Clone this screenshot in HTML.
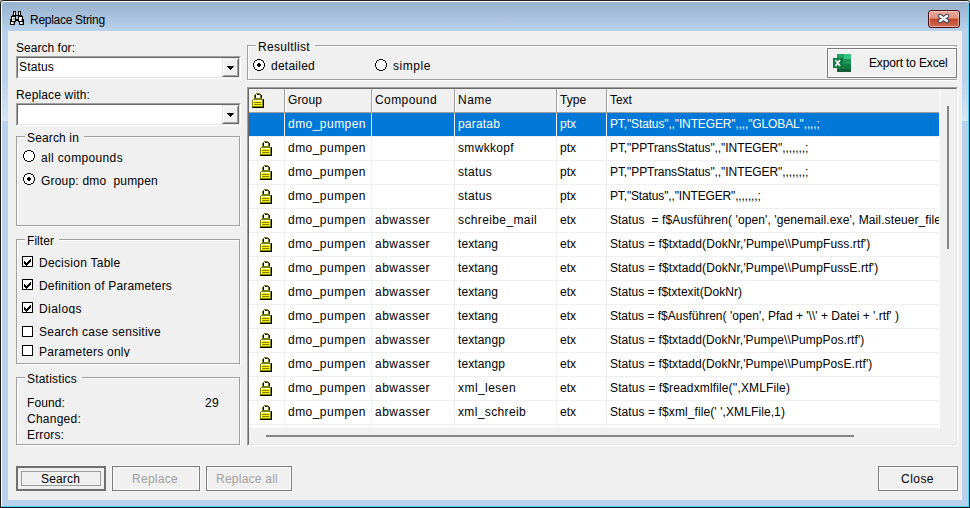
<!DOCTYPE html>
<html><head><meta charset="utf-8"><style>
*{box-sizing:border-box;margin:0;padding:0}
html,body{width:970px;height:508px;overflow:hidden;background:#b4b4b4}
body{position:relative;font-family:"Liberation Sans",sans-serif;font-size:12px;color:#000}
.a{position:absolute}
.t{position:absolute;line-height:20px;white-space:pre}
#title{position:absolute;left:0;top:0;width:970px;height:31px;background:linear-gradient(#95afcc,#b9d1ea);border-radius:4px 4px 0 0}
#frame{position:absolute;left:0;top:31px;width:970px;height:477px;background:#b9d1ea}
#client{position:absolute;left:8px;top:31px;width:954px;height:469px;background:#f0f0f0}
.sunk{position:absolute;border-style:solid;border-width:1px;border-color:#a0a0a0 #fff #fff #a0a0a0}
.sunk>.in{position:absolute;left:0;top:0;right:0;bottom:0;border-style:solid;border-width:1px;border-color:#696969 #e3e3e3 #e3e3e3 #696969;background:#fff}
.ddb{position:absolute;border-style:solid;border-width:1px;border-color:#e3e3e3 #696969 #696969 #e3e3e3;background:#f0f0f0}
.ddb>.in{position:absolute;left:0;top:0;right:0;bottom:0;border-style:solid;border-width:1px;border-color:#fff #a0a0a0 #a0a0a0 #fff}
.grp{position:absolute;border:1px solid #a0a0a0;box-shadow:inset 1px 1px 0 #fff,1px 1px 0 #fff}
.gl{position:absolute;background:#f0f0f0;line-height:20px;white-space:pre}
.btn{position:absolute;border:1px solid #7a7a7a;background:#f0f0f0;box-shadow:inset 0 0 0 1px #fff,0 0 0 1px #f7f7f7}
</style></head><body>
<div id="frame"></div><div id="title"></div>
<div class="a" style="left:0;top:0;width:970px;height:508px;border-left:1px solid #1b1b1b;border-top:1px solid #1e1e1e;border-radius:4px 4px 0 0"></div>
<div class="a" style="left:1px;top:1px;width:968px;height:506px;border-left:1px solid #fff;border-top:1px solid #fff;border-radius:3px 3px 0 0"></div>
<div class="a" style="left:968px;top:4px;width:1px;height:503px;background:#45d8ff"></div>
<div class="a" style="left:1px;top:506px;width:968px;height:1px;background:#45d8ff"></div>
<div class="a" style="left:969px;top:3px;width:1px;height:505px;background:#1a1a1a"></div>
<div class="a" style="left:0;top:507px;width:970px;height:1px;background:#111"></div>
<div class="a" style="left:2px;top:78px;width:6px;height:43px;background:linear-gradient(rgba(255,255,255,0),rgba(255,255,255,.45))"></div>
<div class="a" style="left:962px;top:78px;width:6px;height:43px;background:linear-gradient(rgba(255,255,255,0),rgba(255,255,255,.45))"></div>
<div id="client"></div>
<svg class="a" style="left:10px;top:11px" width="14" height="14" viewBox="0 0 14 14" shape-rendering="crispEdges"><path fill="#000" d="M3 0h3v4H3zM8 0h3v4H8zM2 4h10v1H2zM1 5h5v5H1zM8 5h5v5H8zM0 8h1v6H0zM13 8h1v6h-1zM5 8h4v2H5zM0 10h6v1H0zM8 10h6v1H8zM4 11h1v2H4zM9 11h1v2H9zM0 13h5v1H0zM9 13h5v1H9z"/><path fill="#fff" d="M4 1h1v3H4zM9 1h1v3H9zM2 6h3v4H2zM9 6h3v4H9zM1 11h3v2H1zM10 11h3v2h-3z"/><path fill="#a0a0a0" d="M3 7h2v2H3zM11 8h1v2h-1zM3 11h1v2H3zM12 11h1v2h-1z"/></svg>
<div class="t" style="left:30px;top:10px;letter-spacing:-0.28px;">Replace String</div>
<div class="a" style="left:928px;top:10px;width:32px;height:18px;border:1px solid #4a1018;border-radius:3px;background:linear-gradient(#eaa99a 0,#e0927f 45%,#c2442a 50%,#d06c55 100%);box-shadow:inset 0 0 0 1px rgba(255,225,215,.55)"></div>
<svg class="a" style="left:937px;top:13px" width="13" height="11" viewBox="0 0 13 11"><path d="M3 3L10 8M10 3L3 8" stroke="#2b3850" stroke-width="4.4" stroke-linecap="round"/><path d="M3 3L10 8M10 3L3 8" stroke="#fff" stroke-width="2.6" stroke-linecap="round"/></svg>
<div class="t" style="left:16px;top:38px;letter-spacing:0.028px;">Search for:</div>
<div class="sunk" style="left:16px;top:56px;width:225px;height:23px"><div class="in"></div></div><div class="ddb" style="left:222px;top:58px;width:17px;height:19px"><div class="in"></div></div><svg class="a" style="left:227px;top:66px" width="7" height="4" viewBox="0 0 7 4" shape-rendering="crispEdges"><path fill="#000" d="M0 0h7v1H0zM1 1h5v1H1zM2 2h3v1H2zM3 3h1v1H3z"/></svg>
<div class="t" style="left:19px;top:57px;letter-spacing:0.163px;">Status</div>
<div class="t" style="left:16px;top:85px;letter-spacing:0.151px;">Replace with:</div>
<div class="sunk" style="left:16px;top:103px;width:225px;height:23px"><div class="in"></div></div><div class="ddb" style="left:222px;top:105px;width:17px;height:19px"><div class="in"></div></div><svg class="a" style="left:227px;top:113px" width="7" height="4" viewBox="0 0 7 4" shape-rendering="crispEdges"><path fill="#000" d="M0 0h7v1H0zM1 1h5v1H1zM2 2h3v1H2zM3 3h1v1H3z"/></svg>
<div class="grp" style="left:16px;top:136px;width:224px;height:90px"></div>
<div class="t" style="left:25px;top:128px;letter-spacing:0.145px;background:#f0f0f0;padding:0 5px 0 2px">Search in</div>
<svg class="a" style="left:23px;top:150px" width="12" height="12" viewBox="0 0 12 12" shape-rendering="crispEdges"><path fill="#fff" d="M4 1h4v1H4zM2 2h8v2H2zM1 4h10v4H1zM2 8h8v2H2zM4 10h4v1H4z"/><path fill="#000" d="M4 0h4v1H4zM2 1h2v1H2zM8 1h2v1H8zM1 2h1v2H1zM10 2h1v2h-1zM0 4h1v4H0zM11 4h1v4h-1zM1 8h1v2H1zM10 8h1v2h-1zM2 10h2v1H2zM8 10h2v1H8zM4 11h4v1H4z"/></svg>
<div class="t" style="left:41px;top:148px;letter-spacing:0.355px;">all compounds</div>
<svg class="a" style="left:23px;top:173px" width="12" height="12" viewBox="0 0 12 12" shape-rendering="crispEdges"><path fill="#fff" d="M4 1h4v1H4zM2 2h8v2H2zM1 4h10v4H1zM2 8h8v2H2zM4 10h4v1H4z"/><path fill="#000" d="M4 0h4v1H4zM2 1h2v1H2zM8 1h2v1H8zM1 2h1v2H1zM10 2h1v2h-1zM0 4h1v4H0zM11 4h1v4h-1zM1 8h1v2H1zM10 8h1v2h-1zM2 10h2v1H2zM8 10h2v1H8zM4 11h4v1H4z"/><path fill="#000" d="M5 4h2v1H5zM4 5h4v2H4zM5 7h2v1H5z"/></svg>
<div class="t" style="left:41px;top:171px;letter-spacing:0.2px;">Group: dmo  pumpen</div>
<div class="grp" style="left:16px;top:239px;width:224px;height:125px"></div>
<div class="t" style="left:25px;top:231px;letter-spacing:0.056px;background:#f0f0f0;padding:0 5px 0 2px">Filter</div>
<svg class="a" style="left:22px;top:256px" width="11" height="11" viewBox="0 0 11 11" shape-rendering="crispEdges"><path fill="#000" d="M0 0h11v1H0zM0 10h11v1H0zM0 1h1v9H0zM10 1h1v9h-1z"/><path fill="#fff" d="M1 1h9v9H1z"/><path fill="#000" d="M8 3h1v1H8zM7 4h2v1H7zM2 5h1v1H2zM6 5h3v1H6zM2 6h2v1H2zM5 6h3v1H5zM2 7h5v1H2zM3 8h3v1H3zM4 9h1v1H4z"/></svg>
<div class="t" style="left:39px;top:253px;letter-spacing:0.259px;">Decision Table</div>
<svg class="a" style="left:22px;top:279px" width="11" height="11" viewBox="0 0 11 11" shape-rendering="crispEdges"><path fill="#000" d="M0 0h11v1H0zM0 10h11v1H0zM0 1h1v9H0zM10 1h1v9h-1z"/><path fill="#fff" d="M1 1h9v9H1z"/><path fill="#000" d="M8 3h1v1H8zM7 4h2v1H7zM2 5h1v1H2zM6 5h3v1H6zM2 6h2v1H2zM5 6h3v1H5zM2 7h5v1H2zM3 8h3v1H3zM4 9h1v1H4z"/></svg>
<div class="t" style="left:39px;top:276px;letter-spacing:0.178px;">Definition of Parameters</div>
<svg class="a" style="left:22px;top:302px" width="11" height="11" viewBox="0 0 11 11" shape-rendering="crispEdges"><path fill="#000" d="M0 0h11v1H0zM0 10h11v1H0zM0 1h1v9H0zM10 1h1v9h-1z"/><path fill="#fff" d="M1 1h9v9H1z"/><path fill="#000" d="M8 3h1v1H8zM7 4h2v1H7zM2 5h1v1H2zM6 5h3v1H6zM2 6h2v1H2zM5 6h3v1H5zM2 7h5v1H2zM3 8h3v1H3zM4 9h1v1H4z"/></svg>
<div class="t" style="left:39px;top:299px;letter-spacing:0.426px;height:15px;overflow:hidden;">Dialogs</div>
<svg class="a" style="left:22px;top:326px" width="11" height="11" viewBox="0 0 11 11" shape-rendering="crispEdges"><path fill="#000" d="M0 0h11v1H0zM0 10h11v1H0zM0 1h1v9H0zM10 1h1v9h-1z"/><path fill="#fff" d="M1 1h9v9H1z"/></svg>
<div class="t" style="left:39px;top:322px;letter-spacing:0.251px;">Search case sensitive</div>
<svg class="a" style="left:22px;top:345px" width="11" height="11" viewBox="0 0 11 11" shape-rendering="crispEdges"><path fill="#000" d="M0 0h11v1H0zM0 10h11v1H0zM0 1h1v9H0zM10 1h1v9h-1z"/><path fill="#fff" d="M1 1h9v9H1z"/></svg>
<div class="t" style="left:39px;top:342px;letter-spacing:0.242px;height:15px;overflow:hidden;">Parameters only</div>
<div class="grp" style="left:16px;top:377px;width:224px;height:68px"></div>
<div class="t" style="left:25px;top:369px;letter-spacing:0.199px;background:#f0f0f0;padding:0 5px 0 2px">Statistics</div>
<div class="t" style="left:27px;top:393px;letter-spacing:0.107px;">Found:</div>
<div class="t" style="left:27px;top:409px;letter-spacing:0.245px;">Changed:</div>
<div class="t" style="left:27px;top:425px;letter-spacing:0.143px;">Errors:</div>
<div class="t" style="left:205px;top:393px;letter-spacing:0.326px;">29</div>
<div class="a" style="left:16px;top:466px;width:90px;height:25px;border:2px solid #707070;background:#f0f0f0"></div>
<div class="a" style="left:21px;top:471px;width:80px;height:15px;border:1px solid #9c9c9c"></div>
<div class="t" style="left:41px;top:469px;letter-spacing:0.163px;">Search</div>
<div class="btn" style="left:112px;top:466px;width:88px;height:25px"></div>
<div class="t" style="left:132px;top:469px;letter-spacing:0.282px;color:#a0a0a0">Replace</div>
<div class="btn" style="left:206px;top:466px;width:86px;height:25px"></div>
<div class="t" style="left:216px;top:469px;letter-spacing:0.239px;color:#a0a0a0">Replace all</div>
<div class="btn" style="left:878px;top:466px;width:80px;height:25px"></div>
<div class="t" style="left:901px;top:469px;letter-spacing:0.464px;">Close</div>
<div class="grp" style="left:247px;top:45px;width:710px;height:35px"></div>
<div class="t" style="left:256px;top:37px;letter-spacing:0.332px;background:#f0f0f0;padding:0 5px 0 2px">Resultlist</div>
<svg class="a" style="left:253px;top:59px" width="12" height="12" viewBox="0 0 12 12" shape-rendering="crispEdges"><path fill="#fff" d="M4 1h4v1H4zM2 2h8v2H2zM1 4h10v4H1zM2 8h8v2H2zM4 10h4v1H4z"/><path fill="#000" d="M4 0h4v1H4zM2 1h2v1H2zM8 1h2v1H8zM1 2h1v2H1zM10 2h1v2h-1zM0 4h1v4H0zM11 4h1v4h-1zM1 8h1v2H1zM10 8h1v2h-1zM2 10h2v1H2zM8 10h2v1H8zM4 11h4v1H4z"/><path fill="#000" d="M5 4h2v1H5zM4 5h4v2H4zM5 7h2v1H5z"/></svg>
<div class="t" style="left:271px;top:56px;letter-spacing:0.246px;">detailed</div>
<svg class="a" style="left:375px;top:59px" width="12" height="12" viewBox="0 0 12 12" shape-rendering="crispEdges"><path fill="#fff" d="M4 1h4v1H4zM2 2h8v2H2zM1 4h10v4H1zM2 8h8v2H2zM4 10h4v1H4z"/><path fill="#000" d="M4 0h4v1H4zM2 1h2v1H2zM8 1h2v1H8zM1 2h1v2H1zM10 2h1v2h-1zM0 4h1v4H0zM11 4h1v4h-1zM1 8h1v2H1zM10 8h1v2h-1zM2 10h2v1H2zM8 10h2v1H8zM4 11h4v1H4z"/></svg>
<div class="t" style="left:393px;top:56px;letter-spacing:0.554px;">simple</div>
<div class="btn" style="left:827px;top:48px;width:130px;height:30px"></div>
<div class="t" style="left:869px;top:53px;letter-spacing:-0.14px;">Export to Excel</div>
<svg class="a" style="left:832px;top:53px" width="20" height="20" viewBox="0 0 20 20" shape-rendering="crispEdges"><rect x="5" y="1" width="14" height="18" fill="#185c37"/><rect x="5" y="1" width="14" height="5" fill="#21a366"/><rect x="12" y="1" width="7" height="5" fill="#33c481"/><rect x="5" y="6" width="14" height="5" fill="#1e9459"/><rect x="5" y="11" width="14" height="5" fill="#107c41"/><rect x="1" y="5" width="10" height="10" fill="#107c41"/><path d="M3.5 7L8 13M8 7L3.5 13" stroke="#fff" stroke-width="1.6" shape-rendering="geometricPrecision"/></svg>
<div class="sunk" style="left:247px;top:87px;width:711px;height:359px"><div class="in" style="background:#f0f0f0"></div></div>
<div class="a" style="left:249px;top:113px;width:691px;height:315px;background:#fff"></div>
<div class="a" style="left:249px;top:89px;width:690px;height:24px;background:#f0f0f0;border-bottom:1px solid #a0a0a0"></div>
<div class="a" style="left:939px;top:89px;width:1px;height:339px;background:#fff"></div>
<div class="a" style="left:284px;top:89px;width:1px;height:23px;background:#a0a0a0"></div>
<div class="a" style="left:285px;top:89px;width:1px;height:23px;background:#fff"></div>
<div class="a" style="left:371px;top:89px;width:1px;height:23px;background:#a0a0a0"></div>
<div class="a" style="left:372px;top:89px;width:1px;height:23px;background:#fff"></div>
<div class="a" style="left:454px;top:89px;width:1px;height:23px;background:#a0a0a0"></div>
<div class="a" style="left:455px;top:89px;width:1px;height:23px;background:#fff"></div>
<div class="a" style="left:556px;top:89px;width:1px;height:23px;background:#a0a0a0"></div>
<div class="a" style="left:557px;top:89px;width:1px;height:23px;background:#fff"></div>
<div class="a" style="left:606px;top:89px;width:1px;height:23px;background:#a0a0a0"></div>
<div class="a" style="left:607px;top:89px;width:1px;height:23px;background:#fff"></div>
<div class="t" style="left:288px;top:90px;letter-spacing:0.13px;">Group</div>
<div class="t" style="left:375px;top:90px;letter-spacing:0.412px;">Compound</div>
<div class="t" style="left:458px;top:90px;letter-spacing:0.498px;">Name</div>
<div class="t" style="left:560px;top:90px;letter-spacing:0.081px;">Type</div>
<div class="t" style="left:610px;top:90px;letter-spacing:-0.084px;">Text</div>
<svg class="a" style="left:252px;top:93px" width="12" height="15" viewBox="0 0 12 15" shape-rendering="crispEdges"><path fill="#808000" d="M4 0h4v1H4zM3 1h1v1H3zM7 1h1v1H7zM2 2h1v4H2zM8 2h1v3H8zM3 5h7v1H3zM1 6h10v1H1zM0 7h1v7H0zM10 7h1v7h-1zM0 13h11v1H0zM2 9h7v1H2zM2 11h7v1H2z"/><path fill="#000" d="M5 1h2v1H5zM8 1h1v1H8zM3 2h1v3H3zM9 2h1v3H9zM11 6h1v9h-1zM0 14h11v1H0z"/><path fill="#ffff00" d="M2 8h8v1H2zM2 10h8v1H2zM2 12h8v1H2z"/><path fill="#fff" d="M4 1h1v1H4zM4 2h4v3H4zM1 7h9v1H1zM1 8h1v5H1z"/><path fill="#c8c8c8" d="M9 9h1v1H9zM9 11h1v1H9z"/></svg>
<div class="a" style="left:249px;top:113px;width:690px;height:23px;background:#0078d7"></div>
<div class="a" style="left:249px;top:136px;width:690px;height:1px;background:#f0f0f0"></div>
<div class="t" style="left:288px;top:114px;letter-spacing:0.462px;width:83px;overflow:hidden;color:#fff">dmo_pumpen</div>
<div class="t" style="left:375px;top:114px;letter-spacing:0px;width:79px;overflow:hidden;color:#fff"></div>
<div class="t" style="left:458px;top:114px;letter-spacing:0.186px;width:98px;overflow:hidden;color:#fff">paratab</div>
<div class="t" style="left:560px;top:114px;letter-spacing:-0.003px;width:46px;overflow:hidden;color:#fff">ptx</div>
<div class="t" style="left:610px;top:114px;letter-spacing:-0.135px;width:329px;overflow:hidden;color:#fff">PT,&quot;Status&quot;,,&quot;INTEGER&quot;,,,,&quot;GLOBAL&quot;,,,,;</div>
<div class="a" style="left:249px;top:160px;width:690px;height:1px;background:#f0f0f0"></div>
<svg class="a" style="left:260px;top:141px" width="12" height="15" viewBox="0 0 12 15" shape-rendering="crispEdges"><path fill="#808000" d="M4 0h4v1H4zM3 1h1v1H3zM7 1h1v1H7zM2 2h1v4H2zM8 2h1v3H8zM3 5h7v1H3zM1 6h10v1H1zM0 7h1v7H0zM10 7h1v7h-1zM0 13h11v1H0zM2 9h7v1H2zM2 11h7v1H2z"/><path fill="#000" d="M5 1h2v1H5zM8 1h1v1H8zM3 2h1v3H3zM9 2h1v3H9zM11 6h1v9h-1zM0 14h11v1H0z"/><path fill="#ffff00" d="M2 8h8v1H2zM2 10h8v1H2zM2 12h8v1H2z"/><path fill="#fff" d="M4 1h1v1H4zM4 2h4v3H4zM1 7h9v1H1zM1 8h1v5H1z"/><path fill="#c8c8c8" d="M9 9h1v1H9zM9 11h1v1H9z"/></svg>
<div class="t" style="left:288px;top:138px;letter-spacing:0.462px;width:83px;overflow:hidden;color:#000">dmo_pumpen</div>
<div class="t" style="left:375px;top:138px;letter-spacing:0px;width:79px;overflow:hidden;color:#000"></div>
<div class="t" style="left:458px;top:138px;letter-spacing:0.332px;width:98px;overflow:hidden;color:#000">smwkkopf</div>
<div class="t" style="left:560px;top:138px;letter-spacing:-0.003px;width:46px;overflow:hidden;color:#000">ptx</div>
<div class="t" style="left:610px;top:138px;letter-spacing:-0.083px;width:329px;overflow:hidden;color:#000">PT,&quot;PPTransStatus&quot;,,&quot;INTEGER&quot;,,,,,,,;</div>
<div class="a" style="left:249px;top:184px;width:690px;height:1px;background:#f0f0f0"></div>
<svg class="a" style="left:260px;top:165px" width="12" height="15" viewBox="0 0 12 15" shape-rendering="crispEdges"><path fill="#808000" d="M4 0h4v1H4zM3 1h1v1H3zM7 1h1v1H7zM2 2h1v4H2zM8 2h1v3H8zM3 5h7v1H3zM1 6h10v1H1zM0 7h1v7H0zM10 7h1v7h-1zM0 13h11v1H0zM2 9h7v1H2zM2 11h7v1H2z"/><path fill="#000" d="M5 1h2v1H5zM8 1h1v1H8zM3 2h1v3H3zM9 2h1v3H9zM11 6h1v9h-1zM0 14h11v1H0z"/><path fill="#ffff00" d="M2 8h8v1H2zM2 10h8v1H2zM2 12h8v1H2z"/><path fill="#fff" d="M4 1h1v1H4zM4 2h4v3H4zM1 7h9v1H1zM1 8h1v5H1z"/><path fill="#c8c8c8" d="M9 9h1v1H9zM9 11h1v1H9z"/></svg>
<div class="t" style="left:288px;top:162px;letter-spacing:0.462px;width:83px;overflow:hidden;color:#000">dmo_pumpen</div>
<div class="t" style="left:375px;top:162px;letter-spacing:0px;width:79px;overflow:hidden;color:#000"></div>
<div class="t" style="left:458px;top:162px;letter-spacing:0.331px;width:98px;overflow:hidden;color:#000">status</div>
<div class="t" style="left:560px;top:162px;letter-spacing:-0.003px;width:46px;overflow:hidden;color:#000">ptx</div>
<div class="t" style="left:610px;top:162px;letter-spacing:-0.083px;width:329px;overflow:hidden;color:#000">PT,&quot;PPTransStatus&quot;,,&quot;INTEGER&quot;,,,,,,,;</div>
<div class="a" style="left:249px;top:208px;width:690px;height:1px;background:#f0f0f0"></div>
<svg class="a" style="left:260px;top:189px" width="12" height="15" viewBox="0 0 12 15" shape-rendering="crispEdges"><path fill="#808000" d="M4 0h4v1H4zM3 1h1v1H3zM7 1h1v1H7zM2 2h1v4H2zM8 2h1v3H8zM3 5h7v1H3zM1 6h10v1H1zM0 7h1v7H0zM10 7h1v7h-1zM0 13h11v1H0zM2 9h7v1H2zM2 11h7v1H2z"/><path fill="#000" d="M5 1h2v1H5zM8 1h1v1H8zM3 2h1v3H3zM9 2h1v3H9zM11 6h1v9h-1zM0 14h11v1H0z"/><path fill="#ffff00" d="M2 8h8v1H2zM2 10h8v1H2zM2 12h8v1H2z"/><path fill="#fff" d="M4 1h1v1H4zM4 2h4v3H4zM1 7h9v1H1zM1 8h1v5H1z"/><path fill="#c8c8c8" d="M9 9h1v1H9zM9 11h1v1H9z"/></svg>
<div class="t" style="left:288px;top:186px;letter-spacing:0.462px;width:83px;overflow:hidden;color:#000">dmo_pumpen</div>
<div class="t" style="left:375px;top:186px;letter-spacing:0px;width:79px;overflow:hidden;color:#000"></div>
<div class="t" style="left:458px;top:186px;letter-spacing:0.331px;width:98px;overflow:hidden;color:#000">status</div>
<div class="t" style="left:560px;top:186px;letter-spacing:-0.003px;width:46px;overflow:hidden;color:#000">ptx</div>
<div class="t" style="left:610px;top:186px;letter-spacing:-0.147px;width:329px;overflow:hidden;color:#000">PT,&quot;Status&quot;,,&quot;INTEGER&quot;,,,,,,,;</div>
<div class="a" style="left:249px;top:232px;width:690px;height:1px;background:#f0f0f0"></div>
<svg class="a" style="left:260px;top:213px" width="12" height="15" viewBox="0 0 12 15" shape-rendering="crispEdges"><path fill="#808000" d="M4 0h4v1H4zM3 1h1v1H3zM7 1h1v1H7zM2 2h1v4H2zM8 2h1v3H8zM3 5h7v1H3zM1 6h10v1H1zM0 7h1v7H0zM10 7h1v7h-1zM0 13h11v1H0zM2 9h7v1H2zM2 11h7v1H2z"/><path fill="#000" d="M5 1h2v1H5zM8 1h1v1H8zM3 2h1v3H3zM9 2h1v3H9zM11 6h1v9h-1zM0 14h11v1H0z"/><path fill="#ffff00" d="M2 8h8v1H2zM2 10h8v1H2zM2 12h8v1H2z"/><path fill="#fff" d="M4 1h1v1H4zM4 2h4v3H4zM1 7h9v1H1zM1 8h1v5H1z"/><path fill="#c8c8c8" d="M9 9h1v1H9zM9 11h1v1H9z"/></svg>
<div class="t" style="left:288px;top:210px;letter-spacing:0.462px;width:83px;overflow:hidden;color:#000">dmo_pumpen</div>
<div class="t" style="left:375px;top:210px;letter-spacing:0.455px;width:79px;overflow:hidden;color:#000">abwasser</div>
<div class="t" style="left:458px;top:210px;letter-spacing:0.382px;width:98px;overflow:hidden;color:#000">schreibe_mail</div>
<div class="t" style="left:560px;top:210px;letter-spacing:-0.003px;width:46px;overflow:hidden;color:#000">etx</div>
<div class="t" style="left:610px;top:210px;letter-spacing:0.10777777777777778px;width:329px;overflow:hidden;color:#000">Status  = f$Ausführen( &#x27;open&#x27;, &#x27;genemail.exe&#x27;, Mail.steuer_file, &#x27;&#x27;, 1 )</div>
<div class="a" style="left:249px;top:256px;width:690px;height:1px;background:#f0f0f0"></div>
<svg class="a" style="left:260px;top:237px" width="12" height="15" viewBox="0 0 12 15" shape-rendering="crispEdges"><path fill="#808000" d="M4 0h4v1H4zM3 1h1v1H3zM7 1h1v1H7zM2 2h1v4H2zM8 2h1v3H8zM3 5h7v1H3zM1 6h10v1H1zM0 7h1v7H0zM10 7h1v7h-1zM0 13h11v1H0zM2 9h7v1H2zM2 11h7v1H2z"/><path fill="#000" d="M5 1h2v1H5zM8 1h1v1H8zM3 2h1v3H3zM9 2h1v3H9zM11 6h1v9h-1zM0 14h11v1H0z"/><path fill="#ffff00" d="M2 8h8v1H2zM2 10h8v1H2zM2 12h8v1H2z"/><path fill="#fff" d="M4 1h1v1H4zM4 2h4v3H4zM1 7h9v1H1zM1 8h1v5H1z"/><path fill="#c8c8c8" d="M9 9h1v1H9zM9 11h1v1H9z"/></svg>
<div class="t" style="left:288px;top:234px;letter-spacing:0.462px;width:83px;overflow:hidden;color:#000">dmo_pumpen</div>
<div class="t" style="left:375px;top:234px;letter-spacing:0.455px;width:79px;overflow:hidden;color:#000">abwasser</div>
<div class="t" style="left:458px;top:234px;letter-spacing:0.091px;width:98px;overflow:hidden;color:#000">textang</div>
<div class="t" style="left:560px;top:234px;letter-spacing:-0.003px;width:46px;overflow:hidden;color:#000">etx</div>
<div class="t" style="left:610px;top:234px;letter-spacing:0.101px;width:329px;overflow:hidden;color:#000">Status = f$txtadd(DokNr,&#x27;Pumpe\\PumpFuss.rtf&#x27;)</div>
<div class="a" style="left:249px;top:280px;width:690px;height:1px;background:#f0f0f0"></div>
<svg class="a" style="left:260px;top:261px" width="12" height="15" viewBox="0 0 12 15" shape-rendering="crispEdges"><path fill="#808000" d="M4 0h4v1H4zM3 1h1v1H3zM7 1h1v1H7zM2 2h1v4H2zM8 2h1v3H8zM3 5h7v1H3zM1 6h10v1H1zM0 7h1v7H0zM10 7h1v7h-1zM0 13h11v1H0zM2 9h7v1H2zM2 11h7v1H2z"/><path fill="#000" d="M5 1h2v1H5zM8 1h1v1H8zM3 2h1v3H3zM9 2h1v3H9zM11 6h1v9h-1zM0 14h11v1H0z"/><path fill="#ffff00" d="M2 8h8v1H2zM2 10h8v1H2zM2 12h8v1H2z"/><path fill="#fff" d="M4 1h1v1H4zM4 2h4v3H4zM1 7h9v1H1zM1 8h1v5H1z"/><path fill="#c8c8c8" d="M9 9h1v1H9zM9 11h1v1H9z"/></svg>
<div class="t" style="left:288px;top:258px;letter-spacing:0.462px;width:83px;overflow:hidden;color:#000">dmo_pumpen</div>
<div class="t" style="left:375px;top:258px;letter-spacing:0.455px;width:79px;overflow:hidden;color:#000">abwasser</div>
<div class="t" style="left:458px;top:258px;letter-spacing:0.091px;width:98px;overflow:hidden;color:#000">textang</div>
<div class="t" style="left:560px;top:258px;letter-spacing:-0.003px;width:46px;overflow:hidden;color:#000">etx</div>
<div class="t" style="left:610px;top:258px;letter-spacing:0.099px;width:329px;overflow:hidden;color:#000">Status = f$txtadd(DokNr,&#x27;Pumpe\\PumpFussE.rtf&#x27;)</div>
<div class="a" style="left:249px;top:304px;width:690px;height:1px;background:#f0f0f0"></div>
<svg class="a" style="left:260px;top:285px" width="12" height="15" viewBox="0 0 12 15" shape-rendering="crispEdges"><path fill="#808000" d="M4 0h4v1H4zM3 1h1v1H3zM7 1h1v1H7zM2 2h1v4H2zM8 2h1v3H8zM3 5h7v1H3zM1 6h10v1H1zM0 7h1v7H0zM10 7h1v7h-1zM0 13h11v1H0zM2 9h7v1H2zM2 11h7v1H2z"/><path fill="#000" d="M5 1h2v1H5zM8 1h1v1H8zM3 2h1v3H3zM9 2h1v3H9zM11 6h1v9h-1zM0 14h11v1H0z"/><path fill="#ffff00" d="M2 8h8v1H2zM2 10h8v1H2zM2 12h8v1H2z"/><path fill="#fff" d="M4 1h1v1H4zM4 2h4v3H4zM1 7h9v1H1zM1 8h1v5H1z"/><path fill="#c8c8c8" d="M9 9h1v1H9zM9 11h1v1H9z"/></svg>
<div class="t" style="left:288px;top:282px;letter-spacing:0.462px;width:83px;overflow:hidden;color:#000">dmo_pumpen</div>
<div class="t" style="left:375px;top:282px;letter-spacing:0.455px;width:79px;overflow:hidden;color:#000">abwasser</div>
<div class="t" style="left:458px;top:282px;letter-spacing:0.091px;width:98px;overflow:hidden;color:#000">textang</div>
<div class="t" style="left:560px;top:282px;letter-spacing:-0.003px;width:46px;overflow:hidden;color:#000">etx</div>
<div class="t" style="left:610px;top:282px;letter-spacing:0.038px;width:329px;overflow:hidden;color:#000">Status = f$txtexit(DokNr)</div>
<div class="a" style="left:249px;top:328px;width:690px;height:1px;background:#f0f0f0"></div>
<svg class="a" style="left:260px;top:309px" width="12" height="15" viewBox="0 0 12 15" shape-rendering="crispEdges"><path fill="#808000" d="M4 0h4v1H4zM3 1h1v1H3zM7 1h1v1H7zM2 2h1v4H2zM8 2h1v3H8zM3 5h7v1H3zM1 6h10v1H1zM0 7h1v7H0zM10 7h1v7h-1zM0 13h11v1H0zM2 9h7v1H2zM2 11h7v1H2z"/><path fill="#000" d="M5 1h2v1H5zM8 1h1v1H8zM3 2h1v3H3zM9 2h1v3H9zM11 6h1v9h-1zM0 14h11v1H0z"/><path fill="#ffff00" d="M2 8h8v1H2zM2 10h8v1H2zM2 12h8v1H2z"/><path fill="#fff" d="M4 1h1v1H4zM4 2h4v3H4zM1 7h9v1H1zM1 8h1v5H1z"/><path fill="#c8c8c8" d="M9 9h1v1H9zM9 11h1v1H9z"/></svg>
<div class="t" style="left:288px;top:306px;letter-spacing:0.462px;width:83px;overflow:hidden;color:#000">dmo_pumpen</div>
<div class="t" style="left:375px;top:306px;letter-spacing:0.455px;width:79px;overflow:hidden;color:#000">abwasser</div>
<div class="t" style="left:458px;top:306px;letter-spacing:0.091px;width:98px;overflow:hidden;color:#000">textang</div>
<div class="t" style="left:560px;top:306px;letter-spacing:-0.003px;width:46px;overflow:hidden;color:#000">etx</div>
<div class="t" style="left:610px;top:306px;letter-spacing:0.007333333333333334px;width:329px;overflow:hidden;color:#000">Status = f$Ausführen( &#x27;open&#x27;, Pfad + &#x27;\\&#x27; + Datei + &#x27;.rtf&#x27; )</div>
<div class="a" style="left:249px;top:352px;width:690px;height:1px;background:#f0f0f0"></div>
<svg class="a" style="left:260px;top:333px" width="12" height="15" viewBox="0 0 12 15" shape-rendering="crispEdges"><path fill="#808000" d="M4 0h4v1H4zM3 1h1v1H3zM7 1h1v1H7zM2 2h1v4H2zM8 2h1v3H8zM3 5h7v1H3zM1 6h10v1H1zM0 7h1v7H0zM10 7h1v7h-1zM0 13h11v1H0zM2 9h7v1H2zM2 11h7v1H2z"/><path fill="#000" d="M5 1h2v1H5zM8 1h1v1H8zM3 2h1v3H3zM9 2h1v3H9zM11 6h1v9h-1zM0 14h11v1H0z"/><path fill="#ffff00" d="M2 8h8v1H2zM2 10h8v1H2zM2 12h8v1H2z"/><path fill="#fff" d="M4 1h1v1H4zM4 2h4v3H4zM1 7h9v1H1zM1 8h1v5H1z"/><path fill="#c8c8c8" d="M9 9h1v1H9zM9 11h1v1H9z"/></svg>
<div class="t" style="left:288px;top:330px;letter-spacing:0.462px;width:83px;overflow:hidden;color:#000">dmo_pumpen</div>
<div class="t" style="left:375px;top:330px;letter-spacing:0.455px;width:79px;overflow:hidden;color:#000">abwasser</div>
<div class="t" style="left:458px;top:330px;letter-spacing:0.12px;width:98px;overflow:hidden;color:#000">textangp</div>
<div class="t" style="left:560px;top:330px;letter-spacing:-0.003px;width:46px;overflow:hidden;color:#000">etx</div>
<div class="t" style="left:610px;top:330px;letter-spacing:0.089px;width:329px;overflow:hidden;color:#000">Status = f$txtadd(DokNr,&#x27;Pumpe\\PumpPos.rtf&#x27;)</div>
<div class="a" style="left:249px;top:376px;width:690px;height:1px;background:#f0f0f0"></div>
<svg class="a" style="left:260px;top:357px" width="12" height="15" viewBox="0 0 12 15" shape-rendering="crispEdges"><path fill="#808000" d="M4 0h4v1H4zM3 1h1v1H3zM7 1h1v1H7zM2 2h1v4H2zM8 2h1v3H8zM3 5h7v1H3zM1 6h10v1H1zM0 7h1v7H0zM10 7h1v7h-1zM0 13h11v1H0zM2 9h7v1H2zM2 11h7v1H2z"/><path fill="#000" d="M5 1h2v1H5zM8 1h1v1H8zM3 2h1v3H3zM9 2h1v3H9zM11 6h1v9h-1zM0 14h11v1H0z"/><path fill="#ffff00" d="M2 8h8v1H2zM2 10h8v1H2zM2 12h8v1H2z"/><path fill="#fff" d="M4 1h1v1H4zM4 2h4v3H4zM1 7h9v1H1zM1 8h1v5H1z"/><path fill="#c8c8c8" d="M9 9h1v1H9zM9 11h1v1H9z"/></svg>
<div class="t" style="left:288px;top:354px;letter-spacing:0.462px;width:83px;overflow:hidden;color:#000">dmo_pumpen</div>
<div class="t" style="left:375px;top:354px;letter-spacing:0.455px;width:79px;overflow:hidden;color:#000">abwasser</div>
<div class="t" style="left:458px;top:354px;letter-spacing:0.12px;width:98px;overflow:hidden;color:#000">textangp</div>
<div class="t" style="left:560px;top:354px;letter-spacing:-0.003px;width:46px;overflow:hidden;color:#000">etx</div>
<div class="t" style="left:610px;top:354px;letter-spacing:0.087px;width:329px;overflow:hidden;color:#000">Status = f$txtadd(DokNr,&#x27;Pumpe\\PumpPosE.rtf&#x27;)</div>
<div class="a" style="left:249px;top:400px;width:690px;height:1px;background:#f0f0f0"></div>
<svg class="a" style="left:260px;top:381px" width="12" height="15" viewBox="0 0 12 15" shape-rendering="crispEdges"><path fill="#808000" d="M4 0h4v1H4zM3 1h1v1H3zM7 1h1v1H7zM2 2h1v4H2zM8 2h1v3H8zM3 5h7v1H3zM1 6h10v1H1zM0 7h1v7H0zM10 7h1v7h-1zM0 13h11v1H0zM2 9h7v1H2zM2 11h7v1H2z"/><path fill="#000" d="M5 1h2v1H5zM8 1h1v1H8zM3 2h1v3H3zM9 2h1v3H9zM11 6h1v9h-1zM0 14h11v1H0z"/><path fill="#ffff00" d="M2 8h8v1H2zM2 10h8v1H2zM2 12h8v1H2z"/><path fill="#fff" d="M4 1h1v1H4zM4 2h4v3H4zM1 7h9v1H1zM1 8h1v5H1z"/><path fill="#c8c8c8" d="M9 9h1v1H9zM9 11h1v1H9z"/></svg>
<div class="t" style="left:288px;top:378px;letter-spacing:0.462px;width:83px;overflow:hidden;color:#000">dmo_pumpen</div>
<div class="t" style="left:375px;top:378px;letter-spacing:0.455px;width:79px;overflow:hidden;color:#000">abwasser</div>
<div class="t" style="left:458px;top:378px;letter-spacing:0.442px;width:98px;overflow:hidden;color:#000">xml_lesen</div>
<div class="t" style="left:560px;top:378px;letter-spacing:-0.003px;width:46px;overflow:hidden;color:#000">etx</div>
<div class="t" style="left:610px;top:378px;letter-spacing:0.12841176470588236px;width:329px;overflow:hidden;color:#000">Status = f$readxmlfile(&#x27;&#x27;,XMLFile)</div>
<div class="a" style="left:249px;top:424px;width:690px;height:1px;background:#f0f0f0"></div>
<svg class="a" style="left:260px;top:405px" width="12" height="15" viewBox="0 0 12 15" shape-rendering="crispEdges"><path fill="#808000" d="M4 0h4v1H4zM3 1h1v1H3zM7 1h1v1H7zM2 2h1v4H2zM8 2h1v3H8zM3 5h7v1H3zM1 6h10v1H1zM0 7h1v7H0zM10 7h1v7h-1zM0 13h11v1H0zM2 9h7v1H2zM2 11h7v1H2z"/><path fill="#000" d="M5 1h2v1H5zM8 1h1v1H8zM3 2h1v3H3zM9 2h1v3H9zM11 6h1v9h-1zM0 14h11v1H0z"/><path fill="#ffff00" d="M2 8h8v1H2zM2 10h8v1H2zM2 12h8v1H2z"/><path fill="#fff" d="M4 1h1v1H4zM4 2h4v3H4zM1 7h9v1H1zM1 8h1v5H1z"/><path fill="#c8c8c8" d="M9 9h1v1H9zM9 11h1v1H9z"/></svg>
<div class="t" style="left:288px;top:402px;letter-spacing:0.462px;width:83px;overflow:hidden;color:#000">dmo_pumpen</div>
<div class="t" style="left:375px;top:402px;letter-spacing:0.455px;width:79px;overflow:hidden;color:#000">abwasser</div>
<div class="t" style="left:458px;top:402px;letter-spacing:0.362px;width:98px;overflow:hidden;color:#000">xml_schreib</div>
<div class="t" style="left:560px;top:402px;letter-spacing:-0.003px;width:46px;overflow:hidden;color:#000">etx</div>
<div class="t" style="left:610px;top:402px;letter-spacing:0.09841176470588237px;width:329px;overflow:hidden;color:#000">Status = f$xml_file(&#x27; &#x27;,XMLFile,1)</div>
<div class="a" style="left:284px;top:113px;width:1px;height:315px;background:#f0f0f0"></div>
<div class="a" style="left:371px;top:113px;width:1px;height:315px;background:#f0f0f0"></div>
<div class="a" style="left:454px;top:113px;width:1px;height:315px;background:#f0f0f0"></div>
<div class="a" style="left:556px;top:113px;width:1px;height:315px;background:#f0f0f0"></div>
<div class="a" style="left:606px;top:113px;width:1px;height:315px;background:#f0f0f0"></div>
<div class="a" style="left:947px;top:106px;width:2px;height:143px;background:#858585"></div>
<div class="a" style="left:266px;top:435px;width:588px;height:2px;background:#858585"></div>
</body></html>
